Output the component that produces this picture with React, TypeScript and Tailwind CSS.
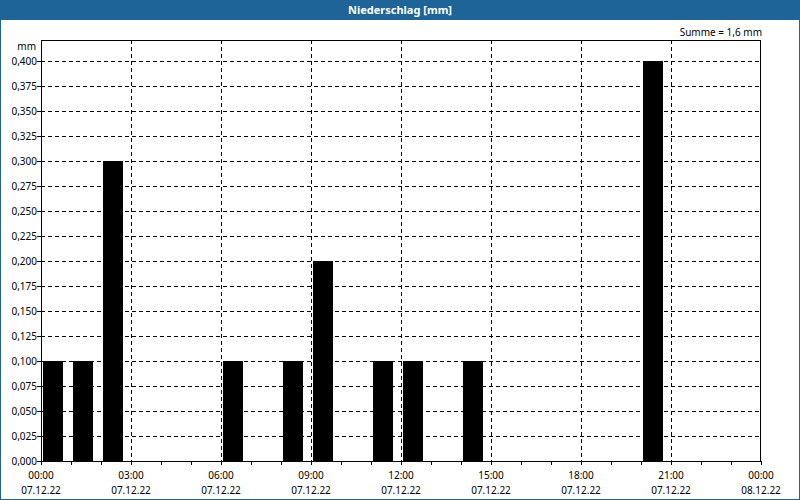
export default function App() {
  const x0 = 41, yb = 461;
  const bars: [number, number][] = [[0,0.1],[1,0.1],[2,0.3],[6,0.1],[8,0.1],[9,0.2],[11,0.1],[12,0.1],[14,0.1],[20,0.4]];
  const ys = Array.from({ length: 17 }, (_, i) => i);
  const xs = [0,3,6,9,12,15,18,21,24];
  return (
    <div className="w-[800px] h-[500px] flex flex-col bg-[#1e6496] font-['DejaVu_Sans',Verdana,sans-serif]">
      <div className="h-[20px] flex items-center justify-center text-white font-bold text-[11px]">Niederschlag [mm]</div>
      <div className="mx-[1px] mb-[1px] flex-1 bg-white">
        <svg width="798" height="479" viewBox="1 20 798 479" className="text-[10px] block">
          <text x="762" y="36" textAnchor="end" fill="#000">Summe = 1,6 mm</text>
          <text x="36" y="50" textAnchor="end" fill="#000">mm</text>
          {ys.map(i => {
            const y = yb - i * 25;
            return (
              <g key={i}>
                {i > 0 && <line x1={x0} x2={760} y1={y + 0.5} y2={y + 0.5} stroke="#000" strokeDasharray="4 3" />}
                <line x1={x0 - 4} x2={x0} y1={y + 0.5} y2={y + 0.5} stroke="#000" />
                <text x="37" y={y + 4} textAnchor="end" fill="#000">{(i * 0.025).toFixed(3).replace('.', ',')}</text>
              </g>
            );
          })}
          {xs.map(h => {
            const x = x0 + h * 30;
            return (
              <g key={h}>
                {h > 0 && h < 24 && <line x1={x + 0.5} x2={x + 0.5} y1={40} y2={yb} stroke="#000" strokeDasharray="4 3" />}
                <text x={x} y={479} textAnchor="middle" fill="#000">{String(h % 24).padStart(2, '0')}:00</text>
                <text x={x} y={494} textAnchor="middle" fill="#000">{h === 24 ? '08.12.22' : '07.12.22'}</text>
              </g>
            );
          })}
          {Array.from({ length: 25 }, (_, h) => (
            <line key={h} x1={x0 + h * 30 + 0.5} x2={x0 + h * 30 + 0.5} y1={yb} y2={yb + 4} stroke="#000" />
          ))}
          {bars.map(([h, v]) => (
            <rect key={h} x={x0 + h * 30 + 2} y={yb - v * 1000} width={20} height={v * 1000} fill="#000" />
          ))}
          <rect x={x0 + 0.5} y={40.5} width={719} height={421} fill="none" stroke="#000" />
        </svg>
      </div>
    </div>
  );
}
